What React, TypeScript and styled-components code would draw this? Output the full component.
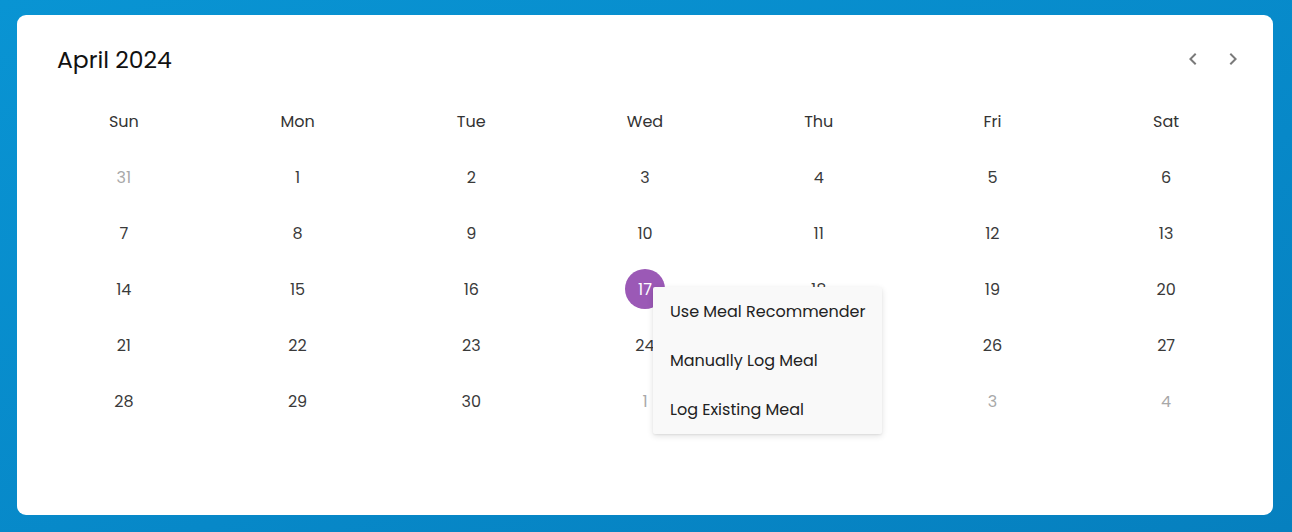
import React from "react";
import styled, { createGlobalStyle } from "styled-components";
import { MdChevronLeft, MdChevronRight } from "react-icons/md";

const Global = createGlobalStyle`
  html, body { margin: 0; padding: 0; }
  body {
    width: 1292px;
    height: 532px;
    overflow: hidden;
    background: linear-gradient(160deg, #0994d3 0%, #0788c8 60%, #0680bf 100%);
    font-family: "Poppins", "Inter", "Noto Sans", sans-serif;
  }
`;

const Page = styled.div`
  box-sizing: border-box;
  width: 1292px;
  height: 532px;
  padding: 15px 19px 17px 17px;
`;

const Card = styled.div`
  box-sizing: border-box;
  height: 500px;
  background: #fff;
  border-radius: 9px;
  padding: 20px;
  display: flex;
  flex-direction: column;
  gap: 10px;
`;

const Header = styled.div`
  height: 48px;
  display: flex;
  align-items: center;
  justify-content: space-between;
  padding-left: 20px;
`;

const Title = styled.h2`
  margin: 0;
  font-size: 23.5px;
  font-weight: 400;
  color: #111;
`;

const Nav = styled.div`
  display: flex;
`;

const NavButton = styled.button`
  width: 40px;
  height: 40px;
  border: none;
  background: none;
  padding: 0;
  display: flex;
  align-items: center;
  justify-content: center;
  color: #7a7a7a;
  cursor: pointer;
`;

const Grid = styled.div`
  display: grid;
  grid-template-columns: repeat(7, 1fr);
  grid-auto-rows: 56px;
`;

const WeekDay = styled.div`
  display: flex;
  align-items: center;
  justify-content: center;
  font-size: 16px;
  font-weight: 400;
  color: #333;
`;

const Cell = styled.div`
  position: relative;
  display: flex;
  align-items: center;
  justify-content: center;
`;

const Day = styled.span<{ $muted?: boolean; $selected?: boolean }>`
  width: 40px;
  height: 40px;
  border-radius: 50%;
  display: flex;
  align-items: center;
  justify-content: center;
  font-size: 16px;
  font-weight: 400;
  color: ${(p) => (p.$selected ? "#fff" : p.$muted ? "#a8a8a8" : "#3a3a3a")};
  background: ${(p) => (p.$selected ? "#9b59b6" : "transparent")};
`;

const Menu = styled.ul`
  position: absolute;
  left: calc(50% + 8px);
  top: 26px;
  z-index: 2;
  margin: 0;
  padding: 0;
  list-style: none;
  width: 229px;
  height: 147px;
  box-sizing: border-box;
  background: #f9f9f9;
  border-radius: 2px;
  box-shadow: 0 2px 6px rgba(0, 0, 0, 0.12), 0 1px 2px rgba(0, 0, 0, 0.06);
  display: flex;
  flex-direction: column;
  justify-content: center;
`;

const MenuItem = styled.li`
  height: 49px;
  display: flex;
  align-items: center;
  padding-left: 17px;
  font-size: 16px;
  color: #222;
  white-space: nowrap;
`;

const weekDays = ["Sun", "Mon", "Tue", "Wed", "Thu", "Fri", "Sat"];

type D = { n: number; muted?: boolean };
const days: D[] = [
  { n: 31, muted: true },
  ...Array.from({ length: 30 }, (_, i) => ({ n: i + 1 })),
  { n: 1, muted: true },
  { n: 2, muted: true },
  { n: 3, muted: true },
  { n: 4, muted: true },
];

export default function App() {
  return (
    <>
      <Global />
      <Page>
        <Card>
          <Header>
            <Title>April 2024</Title>
            <Nav>
              <NavButton aria-label="previous">
                <MdChevronLeft size={24} />
              </NavButton>
              <NavButton aria-label="next">
                <MdChevronRight size={24} />
              </NavButton>
            </Nav>
          </Header>
          <Grid>
            {weekDays.map((w) => (
              <WeekDay key={w}>{w}</WeekDay>
            ))}
            {days.map((d, i) => {
              const selected = !d.muted && d.n === 17;
              return (
                <Cell key={i}>
                  <Day $muted={d.muted} $selected={selected}>
                    {d.n}
                  </Day>
                  {selected && (
                    <Menu>
                      <MenuItem>Use Meal Recommender</MenuItem>
                      <MenuItem>Manually Log Meal</MenuItem>
                      <MenuItem>Log Existing Meal</MenuItem>
                    </Menu>
                  )}
                </Cell>
              );
            })}
          </Grid>
        </Card>
      </Page>
    </>
  );
}
